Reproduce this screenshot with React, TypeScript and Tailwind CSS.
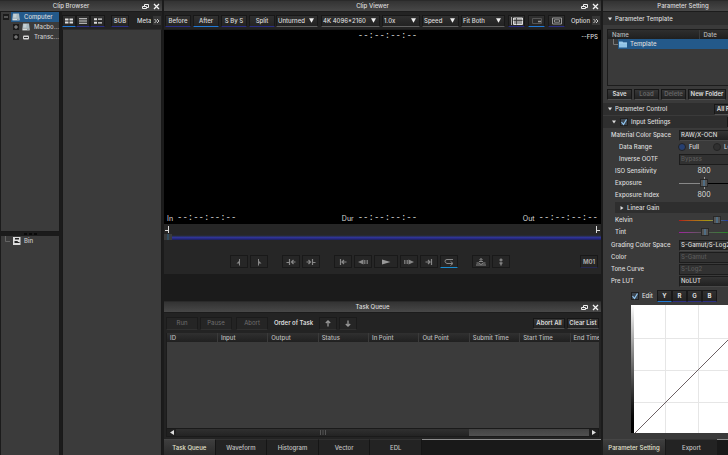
import type { ReactNode } from "react";

const toolButton =
  "flex h-3 shrink-0 items-center justify-center border border-[#181818] bg-linear-to-b from-[#303030] to-[#242424]";
const smallButton =
  "flex h-[11px] shrink-0 items-center justify-center border border-[#171717] border-b-[#505050] bg-linear-to-b from-[#363636] to-[#222222]";
const disabledButton =
  "flex h-[13px] shrink-0 items-center justify-center border border-[#1b1b1b] border-b-[#303030] bg-[#252525] text-[#707070]";

function Glyph({ w = 10, h = 8, children }: { w?: number; h?: number; children: ReactNode }) {
  return (
    <svg width={w} height={h} viewBox={`0 0 ${w} ${h}`} fill="none" stroke="currentColor" aria-hidden="true" className="shrink-0">
      {children}
    </svg>
  );
}

function TitleBar({ title, controls = true }: { title: string; controls?: boolean }) {
  return (
    <header className="flex h-3 shrink-0 items-center border-t border-b border-t-[#2a2a2a] border-b-[#1c1c1c] bg-linear-to-b from-[#333333] to-[#484848]">
      <h2 className="flex-1 text-center font-medium">{title}</h2>
      {controls && (
        <span className="flex w-5 gap-1">
          <button aria-label={`Float ${title}`}>
            <Glyph w={7} h={7}>
              <path d="M2.5 3V1.5h4v3H5M.5 3.5h4v2h-4z" stroke="#eee" />
            </Glyph>
          </button>
          <button aria-label={`Close ${title}`}>
            <Glyph w={7} h={7}>
              <path d="M1 1l5 5M6 1L1 6" stroke="#f4f4f4" strokeWidth="1.3" />
            </Glyph>
          </button>
        </span>
      )}
    </header>
  );
}

function Toggle({ label, on, width, children }: { label: string; on?: boolean; width: string; children?: ReactNode }) {
  return (
    <button
      aria-label={label}
      aria-pressed={!!on}
      className={`${toolButton} ${width} ${on ? "border-b-[#2178d6]" : "border-b-[#2b2f84]"}`}
    >
      {children ?? label}
    </button>
  );
}

function PickList({ label, value, width }: { label: string; value: string; width: string }) {
  return (
    <div className={`relative h-3 shrink-0 ${width}`}>
      <select
        aria-label={label}
        className="block h-full w-full appearance-none border border-[#181818] border-b-[#606060] bg-linear-to-b from-[#303030] to-[#222222] pl-px font-medium outline-none"
      >
        <option>{value}</option>
      </select>
      <svg width="5" height="5" viewBox="0 0 5 5" className="pointer-events-none absolute top-[3px] right-1" aria-hidden="true">
        <path d="M0 .3h5L2.5 4.7z" fill="#eee" />
      </svg>
    </div>
  );
}

function MoreButton({ label }: { label: string }) {
  return (
    <button aria-label={label} className="flex h-[9px] w-2 shrink-0 items-center justify-center bg-[#363636]">
      <Glyph w={6} h={6}>
        <path d="M.5 1l2 2-2 2M3 1l2 2-2 2" stroke="#ccc" />
      </Glyph>
    </button>
  );
}

function Expander({ open, label }: { open?: boolean; label: string }) {
  return (
    <button aria-label={label} className="flex size-1.5 shrink-0 items-center justify-center bg-[#1b1b1b]">
      <Glyph w={6} h={6}>
        <path d={open ? "M1 3h4" : "M1 3h4M3 1v4"} stroke="#aaa" strokeWidth=".8" />
      </Glyph>
    </button>
  );
}

function DiskIcon() {
  return (
    <svg width="8" height="8" viewBox="0 0 8 8" className="shrink-0" aria-hidden="true">
      <path d="M1 .5h6l.6 5H.4z" fill="#a9bac1" />
      <path d="M.4 5.4h7.2v2H.4z" fill="#d6dddd" />
      <path d="M1.6 1h3l-.4 3.5H1.2z" fill="#c4d0d4" />
      <path d="M5.3 6.4h1.3" stroke="#48606c" strokeWidth=".8" />
    </svg>
  );
}

function ClipBrowser() {
  return (
    <section className="flex w-[162px] shrink-0 flex-col">
      <TitleBar title="Clip Browser" />
      <div className="flex min-h-0 flex-1">
        <div className="flex w-15 shrink-0 flex-col pl-px">
          <ul className="h-[220px] border-r border-b border-[#191919] bg-[#3b3b3b]">
            <li className="flex h-2.5 items-center gap-1 pl-0.5">
              <Expander open label="Collapse Computer" />
              <span className="-ml-0.5 flex h-full min-w-0 flex-1 items-center gap-1 bg-[#23598a] pl-px">
                <DiskIcon />
                <span className="font-medium">Computer</span>
              </span>
            </li>
            <li className="flex h-2.5 items-center gap-[3px] pl-3">
              <Expander label="Expand Macbook" />
              <DiskIcon />
              <span className="pl-px font-medium text-[#ccc]">Macbo...</span>
            </li>
            <li className="flex h-2.5 items-center gap-[3px] pl-3">
              <Expander label="Expand Transcoded" />
              <svg width="8" height="8" viewBox="0 0 8 8" className="shrink-0" aria-hidden="true">
                <rect x="1" y="2.5" width="6" height="4" rx="1" fill="#d5d5d5" />
                <path d="M2 4.5h4" stroke="#333" />
              </svg>
              <span className="pl-px font-medium text-[#ccc]">Transc...</span>
            </li>
          </ul>
          <div className="flex h-1 shrink-0 items-center justify-center gap-0.5">
            <span className="h-0.5 w-[3px] bg-[#090909]" />
            <span className="h-0.5 w-[3px] bg-[#090909]" />
            <span className="h-0.5 w-[3px] bg-[#090909]" />
          </div>
          <ul className="min-h-0 flex-1 border-r border-[#191919] bg-[#3b3b3b]">
            <li className="flex h-2.5 items-center gap-[3px] pl-1">
              <Glyph w={5} h={10}>
                <path d="M.5 0v5.5H5" stroke="#777" strokeWidth=".7" />
              </Glyph>
              <svg width="8" height="8" viewBox="0 0 8 8" className="shrink-0" aria-hidden="true">
                <path d="M0 0h7.500v8H0z" fill="#ddd" />
                <path d="M2 1h4v1.500H2zM1.500 4h3l.5 1h1.500v1h-5z" fill="#252525" />
              </svg>
              <span className="font-medium text-[#ccc]">Bin</span>
            </li>
          </ul>
        </div>
        <div className="flex min-w-0 flex-1 flex-col pl-0.5">
          <div className="flex h-[17px] shrink-0 items-center bg-[#232323]">
            <Toggle label="Thumbnails" on width="w-[14px]">
              <Glyph w={8} h={6}>
                <path d="M0 1.5h3.5M4.5 1.5H8M0 4.5h3.5M4.5 4.5H8" strokeWidth="2.2" />
              </Glyph>
            </Toggle>
            <Toggle label="List" width="w-[14px]">
              <Glyph w={8} h={6}>
                <path d="M0 .7h8M0 3h8M0 5.3h8" strokeWidth="1.1" />
              </Glyph>
            </Toggle>
            <Toggle label="Details" width="w-[15px]">
              <Glyph w={8} h={6}>
                <path d="M0 1.2h3M0 4.8h3" strokeWidth="2" />
                <path d="M4 1.2h4M4 4.8h4" strokeWidth="1.2" />
              </Glyph>
            </Toggle>
            <span className="w-1.5 shrink-0" />
            <Toggle label="SUB" width="w-[18px]">
              <span className="font-bold text-[#bbb]">SUB</span>
            </Toggle>
            <span className="ml-2 w-[14px] shrink-0 overflow-hidden whitespace-nowrap font-medium">Meta</span>
            <span className="w-0.5 shrink-0" />
            <MoreButton label="More browser tools" />
          </div>
          <div className="min-h-0 flex-1 border border-b-0 border-[#191919] border-t-[#2c2c2c] bg-[#3b3b3b]" />
        </div>
      </div>
    </section>
  );
}

function Timecode({ label }: { label?: string }) {
  return (
    <span className="flex items-center gap-1 text-[7px] leading-[9px]">
      {label}
      <span className="font-['Liberation_Mono',monospace] text-[9px]">--:--:--:--</span>
    </span>
  );
}

function TransportButton({ label, wide, on, children }: { label: string; wide?: boolean; on?: boolean; children: ReactNode }) {
  return (
    <button
      aria-label={label}
      className={`flex h-[13px] items-center justify-center border border-[#191919] bg-[#262626] text-[#888] ${wide ? "w-6" : "w-[18px]"} ${on ? "border-b-[#1a8cd0]" : ""}`}
    >
      <Glyph>{children}</Glyph>
    </button>
  );
}

function Transport() {
  return (
    <div className="flex h-[13px] items-center gap-3.5 pr-[3px] pl-[66px]">
      <div className="flex gap-0.5">
        <TransportButton label="Mark in">
          <path d="M5.500 1v6.500" />
          <path d="M5.500 2.500v3H2.500z" fill="currentColor" stroke="none" />
        </TransportButton>
        <TransportButton label="Mark out">
          <path d="M4.500 1v6.500" />
          <path d="M4.500 2.500v3h3z" fill="currentColor" stroke="none" />
        </TransportButton>
      </div>
      <div className="flex gap-0.5">
        <TransportButton label="Go to in">
          <path d="M3.500 1v6M.5 4.500h3M9.500 4h-4M7.500 2l-2 2 2 2" strokeWidth="1.200" />
        </TransportButton>
        <TransportButton label="Go to out">
          <path d="M6.500 1v6M6.500 4.500h3M.5 4h4M2.500 2l2 2-2 2" strokeWidth="1.200" />
        </TransportButton>
      </div>
      <div className="flex gap-0.5">
        <TransportButton label="First frame">
          <path d="M2.500 1v6M8.500 4H4M6 2L4 4l2 2" strokeWidth="1.200" />
        </TransportButton>
        <TransportButton label="Step back">
          <path d="M5.500 1.500v5L0 4z" fill="currentColor" stroke="none" />
          <path d="M6.500 2v4M8 2v4M9.500 2v4" strokeWidth=".8" />
        </TransportButton>
        <TransportButton label="Play" wide>
          <path d="M1 1.500v5L9.500 4z" fill="#999" stroke="none" />
        </TransportButton>
        <TransportButton label="Step forward">
          <path d="M4.500 1.500v5L10 4z" fill="currentColor" stroke="none" />
          <path d="M.5 2v4M2 2v4M3.500 2v4" strokeWidth=".8" />
        </TransportButton>
        <TransportButton label="Last frame">
          <path d="M7.500 1v6M1.500 4H6M4 2l2 2-2 2" strokeWidth="1.200" />
        </TransportButton>
        <TransportButton label="Loop" on>
          <path d="M9 1.500H3Q1 1.500 1 3.200T3 5.500h5.500M6.500 3.200L9 5.500 6.500 7.500" />
        </TransportButton>
      </div>
      <div className="flex gap-0.5">
        <TransportButton label="Insert mark">
          <path d="M0 7h10M.5 5h2.500L5 6.500l2-1.500h2.500M5 .5V4M3 3.500h4M3.500 2L5 .5 6.500 2" />
        </TransportButton>
        <TransportButton label="Remove mark">
          <path d="M5 .5v3M3.500 2h3M5 4.500v3M3.500 5h3" strokeWidth="1.400" />
        </TransportButton>
      </div>
      <button className="ml-auto flex h-[13px] w-[18px] items-center justify-center border border-[#191919] border-b-[#262850] bg-[#262626] font-bold text-[#aaa]">
        M01
      </button>
    </div>
  );
}

function ClipViewer() {
  return (
    <section className="flex min-h-0 flex-col">
      <TitleBar title="Clip Viewer" />
      <div className="flex h-[17px] shrink-0 items-center bg-[#232323] pl-px font-medium">
        <div className="flex gap-0.5">
          <Toggle label="Before" width="w-[26px]" />
          <Toggle label="After" on width="w-[26px]" />
          <Toggle label="S By S" width="w-[26px]" />
          <Toggle label="Split" width="w-[26px]" />
        </div>
        <span className="w-px" />
        <PickList label="Rotation" value="Unturned" width="w-[42px]" />
        <span className="w-[3px]" />
        <div className="flex gap-0.5">
          <PickList label="Resolution" value="4K 4096*2160" width="w-[59px]" />
          <PickList label="Pixel aspect" value="1.0x" width="w-[38px]" />
          <PickList label="Playback priority" value="Speed" width="w-[37px]" />
          <PickList label="Fit" value="Fit Both" width="w-[44px]" />
        </div>
        <div className="ml-[3px] flex gap-[3px]">
          <Toggle label="Guide grid" width="w-[17px]">
            <Glyph w={12} h={8}>
              <path d="M.5 0v8" stroke="#aaa" />
              <path d="M2.500 1h9v6.500h-9z" fill="#999" stroke="#ddd" />
              <path d="M5.500 1v6.500M2.500 3.500h9" stroke="#333" strokeWidth=".8" />
            </Glyph>
          </Toggle>
          <Toggle label="Picture in picture" on width="w-[17px]">
            <Glyph>
              <path d="M.5 1.500h9v5h-9z" stroke="#555" />
              <path d="M6 4.500h3" stroke="#999" strokeWidth="1.500" />
            </Glyph>
          </Toggle>
          <Toggle label="Safe area" width="w-[17px]">
            <Glyph>
              <path d="M.5 1h9v6h-9z" stroke="#999" />
              <path d="M2.500 2.800h5v2.400h-5z" stroke="#bbb" strokeWidth=".7" />
            </Glyph>
          </Toggle>
        </div>
        <span className="ml-auto pr-0.5">Option</span>
        <MoreButton label="More viewer tools" />
        <span className="w-px" />
      </div>
      <div className="flex h-[195px] flex-col justify-between border-t border-[#1c1c1c] bg-black px-[3px] pt-0.5 pb-px text-[#ddd]">
        <div className="grid grid-cols-3 items-center">
          <span />
          <span className="flex justify-center pl-2.5">
            <Timecode />
          </span>
          <span className="text-right font-medium">--FPS</span>
        </div>
        <div className="grid grid-cols-3 items-center">
          <Timecode label="In" />
          <span className="flex justify-center pr-1.5">
            <Timecode label="Dur" />
          </span>
          <span className="flex justify-end">
            <Timecode label="Out" />
          </span>
        </div>
      </div>
      <div className="flex h-[50px] shrink-0 flex-col bg-[#262626]">
        <div className="flex h-2.5 items-end justify-between px-px text-[#ddd]">
          <Glyph w={4} h={8}>
            <path d="M3.500 0v7M0 4.500h3" />
          </Glyph>
          <Glyph w={4} h={8}>
            <path d="M.5 0v7M1 4.500h3" />
          </Glyph>
        </div>
        <input
          type="range"
          aria-label="Playhead"
          defaultValue={0}
          className="m-0 block h-1.5 w-full appearance-none bg-linear-to-b from-[#262626] from-20% via-[#30339a] via-60% to-[#1b1d58] [&::-webkit-slider-thumb]:h-1.5 [&::-webkit-slider-thumb]:w-2 [&::-webkit-slider-thumb]:appearance-none [&::-webkit-slider-thumb]:bg-linear-to-r [&::-webkit-slider-thumb]:from-[#3b3b3b] [&::-webkit-slider-thumb]:from-35% [&::-webkit-slider-thumb]:via-[#235878] [&::-webkit-slider-thumb]:via-50% [&::-webkit-slider-thumb]:to-[#3b3b3b] [&::-webkit-slider-thumb]:to-65%"
        />
        <div className="h-[15px]" />
        <Transport />
      </div>
    </section>
  );
}

const queueColumns = ["ID", "Input", "Output", "Status", "In Point", "Out Point", "Submit Time", "Start Time", "End Time"];
const viewerTabs = ["Task Queue", "Waveform", "Histogram", "Vector", "EDL"];

function TaskQueue() {
  return (
    <section className="flex min-h-0 flex-1 flex-col bg-[#232323]">
      <TitleBar title="Task Queue" />
      <div className="flex h-5 shrink-0 items-center px-0.5">
        <button disabled className={`${disabledButton} w-8`}>Run</button>
        <button disabled className={`${disabledButton} ml-0.5 w-8`}>Pause</button>
        <button disabled className={`${disabledButton} ml-1 w-8`}>Abort</button>
        <span className="mx-1.5 font-semibold">Order of Task</span>
        <button aria-label="Move up" className={`${disabledButton} w-[18px]`}>
          <Glyph w={6} h={7}>
            <path d="M3 6.500V1M.8 3L3 1l2.200 2" stroke="#999" strokeWidth="1.300" />
          </Glyph>
        </button>
        <button aria-label="Move down" className={`${disabledButton} ml-0.5 w-[18px]`}>
          <Glyph w={6} h={7}>
            <path d="M3 .5V6M.8 4L3 6l2.200-2" stroke="#999" strokeWidth="1.300" />
          </Glyph>
        </button>
        <span className="flex-1" />
        <button className={`${smallButton} w-8 font-semibold`}>Abort All</button>
        <button className={`${smallButton} ml-0.5 w-8 font-semibold whitespace-nowrap`}>Clear List</button>
      </div>
      <div className="mx-0.5 flex min-h-0 flex-1 flex-col">
        <div className="min-h-0 flex-1 overflow-hidden border-l border-[#1c1c1c] bg-[#3b3b3b]">
          <table className="w-[454px] table-fixed border-collapse text-left">
            <thead>
              <tr className="h-[9px] bg-linear-to-b from-[#303030] to-[#202020] text-[#bdbdbd]">
                {queueColumns.map((name) => (
                  <th key={name} scope="col" className="border-r border-[#3a3a3a] p-0 pl-[3px] font-medium whitespace-nowrap">
                    {name}
                  </th>
                ))}
              </tr>
            </thead>
            <tbody />
          </table>
        </div>
        <div className="flex h-[9px] shrink-0 items-stretch border border-[#1a1a1a] bg-[#262626] text-[#ddd]">
          <button aria-label="Scroll left" className="flex w-[9px] items-center justify-center bg-[#202020]">
            <Glyph w={4} h={5}>
              <path d="M4 0v5L0 2.500z" fill="currentColor" stroke="none" />
            </Glyph>
          </button>
          <div className="flex flex-[294] items-center justify-center bg-linear-to-b from-[#303030] to-[#232323]">
            <Glyph w={6} h={5}>
              <path d="M.5 0v5M3 0v5M5.500 0v5" stroke="#555" />
            </Glyph>
          </div>
          <div className="flex-[120] bg-linear-to-b from-[#434343] to-[#505050]" />
          <button aria-label="Scroll right" className="flex w-[9px] items-center justify-center bg-[#202020]">
            <Glyph w={4} h={5}>
              <path d="M0 0v5l4-2.500z" fill="currentColor" stroke="none" />
            </Glyph>
          </button>
        </div>
      </div>
      <nav className="mt-0.5 flex h-4 shrink-0 bg-[#191919]">
        <div role="tablist" className="grid w-[258px] shrink-0 grid-cols-5">
          {viewerTabs.map((tab, i) => (
            <button
              key={tab}
              role="tab"
              aria-selected={i === 0}
              className={`border-t border-r border-r-[#151515] font-medium ${i === 0 ? "border-t-[#454545] bg-linear-to-b from-[#3e3e3e] to-[#2b2b2b] text-[#e4e4d0]" : "border-t-[#303030] bg-[#232323] text-[#c4c4c4]"}`}
            >
              {tab}
            </button>
          ))}
        </div>
        <div className="h-px flex-1 bg-[#8c8c8c]" />
      </nav>
    </section>
  );
}

function FieldRow({ label, indent, children }: { label: string; indent?: string; children: ReactNode }) {
  return (
    <label className="flex h-3 items-center">
      <span className={`w-[68px] shrink-0 font-medium ${indent ?? ""}`}>{label}</span>
      {children}
    </label>
  );
}

function FieldSelect({ value, disabled }: { value: string; disabled?: boolean }) {
  return (
    <select
      disabled={disabled}
      className={`block h-[11px] min-w-0 flex-1 appearance-none border border-[#1c1c1c] pl-px font-medium opacity-100 ${disabled ? "bg-[#313131] text-[#5b5b5b]" : "border-b-[#474747] bg-linear-to-b from-[#343434] to-[#202020]"}`}
    >
      <option>{value}</option>
    </select>
  );
}

const thumb =
  "[&::-webkit-slider-thumb]:h-2 [&::-webkit-slider-thumb]:w-2 [&::-webkit-slider-thumb]:appearance-none [&::-webkit-slider-thumb]:border [&::-webkit-slider-thumb]:border-[#292929] [&::-webkit-slider-thumb]:bg-linear-to-r [&::-webkit-slider-thumb]:from-[#555] [&::-webkit-slider-thumb]:from-35% [&::-webkit-slider-thumb]:via-[#3a8ac0] [&::-webkit-slider-thumb]:via-50% [&::-webkit-slider-thumb]:to-[#555] [&::-webkit-slider-thumb]:to-65%";

function FieldSlider({ value, track }: { value: number; track: string }) {
  return (
    <input
      type="range"
      defaultValue={value}
      className={`m-0 block h-2 w-[50px] appearance-none bg-transparent [&::-webkit-slider-runnable-track]:h-px ${track} ${thumb} [&::-webkit-slider-thumb]:-mt-1`}
    />
  );
}

function CheckBox({ label }: { label: string }) {
  return (
    <label className="flex items-center gap-[3px] font-medium">
      <span className="relative block size-2">
        <input type="checkbox" defaultChecked className="block size-2 appearance-none border border-[#202020] bg-[#3d4650]" />
        <svg width="8" height="8" viewBox="0 0 8 8" fill="none" className="pointer-events-none absolute inset-0" aria-hidden="true">
          <path d="M1.500 4l2 2.500 3-5" stroke="#91c8f4" strokeWidth="1.200" />
        </svg>
      </span>
      {label}
    </label>
  );
}

function Triangle({ right }: { right?: boolean }) {
  return (
    <Glyph w={4} h={4}>
      <path d={right ? "M.5 0v4L3.500 2z" : "M0 .5h4L2 3.500z"} fill="#ddd" stroke="none" />
    </Glyph>
  );
}

function ParameterSetting() {
  return (
    <section className="flex w-[125px] shrink-0 flex-col overflow-hidden bg-[#3a3a3a]">
      <div className="flex min-h-0 w-40 flex-1 flex-col">
        <TitleBar title="Parameter Setting" controls={false} />
        <button className="flex h-[13px] shrink-0 items-center gap-[3px] bg-[#2e2e2e] pl-[5px] font-medium">
          <Triangle />
          Parameter Template
        </button>
        <div className="mt-1 ml-1 h-[57px] shrink-0 border border-[#1c1c1c]">
          <table className="w-full table-fixed border-collapse text-left">
            <thead>
              <tr className="h-[9px] bg-linear-to-b from-[#2e2e2e] to-[#1f1f1f] text-[#bdbdbd]">
                <th scope="col" className="w-[91px] border-r border-[#3a3a3a] p-0 pl-1 font-medium">Name</th>
                <th scope="col" className="p-0 pl-1 font-medium">Date</th>
              </tr>
            </thead>
            <tbody>
              <tr className="h-2.5">
                <td colSpan={2} className="p-0">
                  <div className="flex h-2.5 items-center pl-[5px]">
                    <Glyph w={5} h={10}>
                      <path d="M.5 0v5.500H5" stroke="#777" />
                    </Glyph>
                    <span className="flex h-full flex-1 items-center gap-[3px] bg-[#23598a] pl-px font-medium">
                      <svg width="8" height="7" viewBox="0 0 8 7" aria-hidden="true">
                        <path d="M0 .5h3.500l.7 1H8v5H0z" fill="#8fc3e6" />
                        <path d="M0 2h8" stroke="#b8dcf4" strokeWidth=".6" />
                      </svg>
                      Template
                    </span>
                  </div>
                </td>
              </tr>
            </tbody>
          </table>
        </div>
        <div className="mb-px flex h-4 shrink-0 items-center gap-0.5 pl-1 font-semibold">
          <button className={`${smallButton} w-[25px]`}>Save</button>
          <button disabled className={`${smallButton} w-[25px] text-[#666]`}>Load</button>
          <button disabled className={`${smallButton} w-[25px] text-[#666]`}>Delete</button>
          <button className={`${smallButton} w-[38px]`}>New Folder</button>
        </div>
        <div className="flex h-3 shrink-0 items-center bg-[#2e2e2e] pl-[5px]">
          <button className="flex flex-1 items-center gap-[3px] font-medium">
            <Triangle />
            Parameter Control
          </button>
          <button className={`${smallButton} w-[31px] font-semibold`}>All Reset</button>
          <span className="w-[18px]" />
        </div>
        <div className="mt-px flex h-3 shrink-0 items-center gap-1 bg-[#2e2e2e] pl-[9px]">
          <Triangle />
          <CheckBox label="Input Settings" />
          <button aria-label="Reset input settings" className={`${smallButton} mr-2 ml-auto w-7`} />
        </div>
        <form className="mt-px flex shrink-0 flex-col pr-1 pl-2">
          <FieldRow label="Material Color Space">
            <FieldSelect value="RAW/X-OCN" />
          </FieldRow>
          <div role="radiogroup" aria-label="Data Range" className="flex h-3 items-center">
            <span className="w-[66px] shrink-0 pl-2 font-medium">Data Range</span>
            {["Full", "Legal"].map((name, i) => (
              <label key={name} className="flex w-[35px] items-center gap-[3px] font-medium">
                <input
                  type="radio"
                  name="range"
                  defaultChecked={i === 0}
                  className="ml-px size-2 appearance-none rounded-full border border-[#232323] bg-[#303030] checked:bg-[#263f70]"
                />
                {name}
              </label>
            ))}
          </div>
          <FieldRow label="Inverse OOTF" indent="pl-2">
            <FieldSelect value="Bypass" disabled />
          </FieldRow>
          <FieldRow label="ISO Sensitivity" indent="pl-1">
            <input defaultValue="800" className="w-[50px] bg-transparent text-center text-[7px]" />
          </FieldRow>
          <FieldRow label="Exposure" indent="pl-1">
            <span className="flex flex-col items-center">
              <span className="h-0.5 w-px bg-[#999]" />
              <FieldSlider
                value={50}
                track="[&::-webkit-slider-runnable-track]:bg-linear-to-r [&::-webkit-slider-runnable-track]:from-[#888] [&::-webkit-slider-runnable-track]:from-50% [&::-webkit-slider-runnable-track]:to-black [&::-webkit-slider-runnable-track]:to-50%"
              />
              <span className="h-0.5 w-px bg-[#999]" />
            </span>
          </FieldRow>
          <FieldRow label="Exposure Index" indent="pl-1">
            <input defaultValue="800" className="w-[50px] bg-transparent text-center text-[7px]" />
          </FieldRow>
          <button type="button" className="my-px ml-1 flex h-[11px] items-center gap-[3px] bg-[#2e2e2e] pl-[5px] font-medium">
            <Triangle right />
            Linear Gain
          </button>
          <FieldRow label="Kelvin" indent="pl-1">
            <FieldSlider
              value={80}
              track="[&::-webkit-slider-runnable-track]:bg-linear-to-r [&::-webkit-slider-runnable-track]:from-[#b01818] [&::-webkit-slider-runnable-track]:via-[#a49a10] [&::-webkit-slider-runnable-track]:via-60% [&::-webkit-slider-runnable-track]:to-[#1d26a0]"
            />
          </FieldRow>
          <FieldRow label="Tint" indent="pl-1">
            <FieldSlider
              value={53}
              track="[&::-webkit-slider-runnable-track]:bg-linear-to-r [&::-webkit-slider-runnable-track]:from-[#a018a0] [&::-webkit-slider-runnable-track]:via-[#555] [&::-webkit-slider-runnable-track]:to-[#178a1c]"
            />
          </FieldRow>
          <span className="h-px" />
          <FieldRow label="Grading Color Space">
            <FieldSelect value="S-Gamut/S-Log2" />
          </FieldRow>
          <FieldRow label="Color">
            <FieldSelect value="S-Gamut" disabled />
          </FieldRow>
          <FieldRow label="Tone Curve">
            <FieldSelect value="S-Log2" disabled />
          </FieldRow>
          <FieldRow label="Pre LUT">
            <FieldSelect value="NoLUT" />
          </FieldRow>
        </form>
        <div className="mt-px flex h-[15px] shrink-0 items-center pl-7">
          <CheckBox label="Edit" />
          <span className="ml-1 flex font-bold">
            <Toggle label="Y" on width="w-[15px]" />
            <Toggle label="R" width="w-[15px]" />
            <Toggle label="G" width="w-[15px]" />
            <Toggle label="B" width="w-[15px]" />
          </span>
        </div>
        <div className="mt-0.5 ml-7 flex h-32 w-[131px] shrink-0">
          <div className="w-[3px] bg-linear-to-b from-white to-black" />
          <svg width="128" height="128" viewBox="0 0 128 128" className="bg-white" role="img" aria-label="Tone curve">
            <path d="M31.500 0v128M64.500 0v128M96.500 0v128M0 33.500h128M0 65.500h128M0 97.500h128" stroke="#e6e6e6" />
            <path d="M1 128L128 1" stroke="#6d6265" />
          </svg>
        </div>
        <div className="flex-1" />
        <div className="flex h-4 shrink-0 bg-[#191919] font-medium" role="tablist">
          <button role="tab" aria-selected="true" className="w-[62px] border-t border-[#454545] bg-linear-to-b from-[#3e3e3e] to-[#2b2b2b] text-[#e4e4d0]">
            Parameter Setting
          </button>
          <button role="tab" aria-selected="false" className="ml-px w-[51px] border-t border-[#303030] bg-[#232323] text-[#c4c4c4]">
            Export
          </button>
          <div className="h-px flex-1 bg-[#8c8c8c]" />
        </div>
      </div>
    </section>
  );
}

export default function App() {
  return (
    <main className="flex h-screen w-full gap-0.5 overflow-hidden bg-[#1b1b1b] font-[Inter,sans-serif] text-[6px] leading-[8px] text-[#dddddd]">
      <ClipBrowser />
      <div className="flex min-w-0 flex-1 flex-col gap-[27px]">
        <ClipViewer />
        <TaskQueue />
      </div>
      <ParameterSetting />
    </main>
  );
}
